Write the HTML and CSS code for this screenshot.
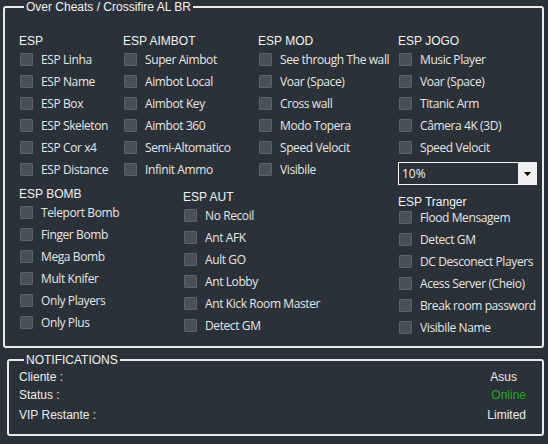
FILE: index.html
```html
<!DOCTYPE html>
<html>
<head>
<meta charset="utf-8">
<title>Over Cheats</title>
<link rel="stylesheet" href="styles.css">
</head>
<body>
<fieldset class="box main-box">
	<legend class="box-title">Over Cheats / Crossifire AL BR</legend>
	<div class="opt-row top-row">
		<div class="opt-col col-esp">
			<div class="grp-title">ESP</div>
			<label class="opt"><input type="checkbox" class="chk">ESP Linha</label>
			<label class="opt"><input type="checkbox" class="chk">ESP Name</label>
			<label class="opt"><input type="checkbox" class="chk">ESP Box</label>
			<label class="opt"><input type="checkbox" class="chk">ESP Skeleton</label>
			<label class="opt"><input type="checkbox" class="chk">ESP Cor x4</label>
			<label class="opt"><input type="checkbox" class="chk">ESP Distance</label>
		</div>
		<div class="opt-col col-aimbot">
			<div class="grp-title">ESP AIMBOT</div>
			<label class="opt"><input type="checkbox" class="chk">Super Aimbot</label>
			<label class="opt"><input type="checkbox" class="chk">Aimbot Local</label>
			<label class="opt"><input type="checkbox" class="chk">Aimbot Key</label>
			<label class="opt"><input type="checkbox" class="chk">Aimbot 360</label>
			<label class="opt"><input type="checkbox" class="chk">Semi-Altomatico</label>
			<label class="opt"><input type="checkbox" class="chk">Infinit Ammo</label>
		</div>
		<div class="opt-col col-mod">
			<div class="grp-title">ESP MOD</div>
			<label class="opt"><input type="checkbox" class="chk">See through The wall</label>
			<label class="opt"><input type="checkbox" class="chk">Voar (Space)</label>
			<label class="opt"><input type="checkbox" class="chk">Cross wall</label>
			<label class="opt"><input type="checkbox" class="chk">Modo Topera</label>
			<label class="opt"><input type="checkbox" class="chk">Speed Velocit</label>
			<label class="opt"><input type="checkbox" class="chk">Visibile</label>
		</div>
		<div class="opt-col col-jogo">
			<div class="grp-title">ESP JOGO</div>
			<label class="opt"><input type="checkbox" class="chk">Music Player</label>
			<label class="opt"><input type="checkbox" class="chk">Voar (Space)</label>
			<label class="opt"><input type="checkbox" class="chk">Titanic Arm</label>
			<label class="opt"><input type="checkbox" class="chk">Câmera 4K (3D)</label>
			<label class="opt"><input type="checkbox" class="chk">Speed Velocit</label>
			<div class="combo">
				<span class="combo-val">10%</span>
				<span class="combo-btn"><svg width="7" height="4" viewBox="0 0 7 4"><path d="M0 0h7L3.5 4z" fill="#000"/></svg></span>
			</div>
		</div>
	</div>
	<div class="opt-row bottom-row">
		<div class="opt-col col-bomb">
			<div class="grp-title">ESP BOMB</div>
			<label class="opt"><input type="checkbox" class="chk">Teleport Bomb</label>
			<label class="opt"><input type="checkbox" class="chk">Finger Bomb</label>
			<label class="opt"><input type="checkbox" class="chk">Mega Bomb</label>
			<label class="opt"><input type="checkbox" class="chk">Mult Knifer</label>
			<label class="opt"><input type="checkbox" class="chk">Only Players</label>
			<label class="opt"><input type="checkbox" class="chk">Only Plus</label>
		</div>
		<div class="opt-col col-aut">
			<div class="grp-title">ESP AUT</div>
			<label class="opt"><input type="checkbox" class="chk">No Recoil</label>
			<label class="opt"><input type="checkbox" class="chk">Ant AFK</label>
			<label class="opt"><input type="checkbox" class="chk">Ault GO</label>
			<label class="opt"><input type="checkbox" class="chk">Ant Lobby</label>
			<label class="opt"><input type="checkbox" class="chk">Ant Kick Room Master</label>
			<label class="opt"><input type="checkbox" class="chk">Detect GM</label>
		</div>
		<div class="opt-col col-tranger">
			<div class="grp-title">ESP Tranger</div>
			<label class="opt"><input type="checkbox" class="chk">Flood Mensagem</label>
			<label class="opt"><input type="checkbox" class="chk">Detect GM</label>
			<label class="opt"><input type="checkbox" class="chk">DC Desconect Players</label>
			<label class="opt"><input type="checkbox" class="chk">Acess Server (Cheio)</label>
			<label class="opt"><input type="checkbox" class="chk">Break room password</label>
			<label class="opt"><input type="checkbox" class="chk">Visibile Name</label>
		</div>
	</div>
</fieldset>
<fieldset class="box notif-box">
	<legend class="box-title">NOTIFICATIONS</legend>
	<div class="info-row r1"><span>Cliente :</span><span class="val-asus">Asus</span></div>
	<div class="info-row r2"><span>Status :</span><span class="val-online">Online</span></div>
	<div class="info-row r3"><span>VIP Restante :</span><span>Limited</span></div>
</fieldset>
</body>
</html>
```
FILE: styles.css
```css
*{margin: 0;padding: 0;box-sizing: border-box;}
html,body{height: 100%;}
body{background-color: #2b3138;color: #ececec;font: 12px "Liberation Sans",Arial,sans-serif;}
.box{border: 2px solid #e9e9e9;border-radius: 3px;}
.box-title{margin-left: 5px;padding: 0 2px;line-height: 14px;font-size: 12px;color: #f2f2f2;}
.main-box{margin: 0 4px 0 3px;height: 348px;padding: 21px 0 0 14px;}
.opt-row{display: flex;}
.opt-col{flex: none;}
.col-esp{width: 104px;}
.col-aimbot{width: 135px;}
.col-mod{width: 140px;}
.col-jogo{width: 139px;}
.col-bomb{width: 164px;margin-top: 3px;}
.col-aut{width: 215px;margin-top: 6px;}
.col-tranger{margin-top: 11px;}
.col-tranger .grp-title{margin-bottom: -3px;}
.grp-title{height: 13px;line-height: 13px;font-size: 12px;color: #f2f2f2;}
.opt{display: flex;align-items: center;height: 22px;font: 12px "Open Sans",sans-serif;letter-spacing: -0.4px;color: #e6e6e6;white-space: nowrap;}
.chk{-webkit-appearance: none;appearance: none;flex: none;width: 13px;height: 13px;margin: 1px 8px 0 1px;background-color: #4a5057;border: 1px solid #5c6268;border-radius: 1px;}
.combo{display: flex;height: 23px;margin-top: 4px;border: 1px solid #f2f2f2;background-color: #2b3138;}
.combo-val{flex: 1;padding-left: 3px;line-height: 21px;font: 12px/21px "Open Sans",sans-serif;color: #f2f2f2;}
.combo-btn{display: flex;align-items: center;justify-content: center;width: 18px;background-color: #f0f0f0;}
.notif-box{margin: 5px 4px 0 7px;height: 83px;padding: 1px 16px 0 10px;}
.info-row{display: flex;justify-content: space-between;height: 18px;line-height: 18px;color: #ececec;}
.info-row.r2{height: 20px;}
.val-asus{margin-right: 9px;}
.val-online{color: #23a823;}
```
